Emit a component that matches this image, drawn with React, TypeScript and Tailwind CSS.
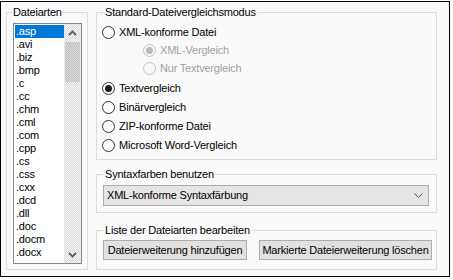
import React from 'react';

const extensions = [
  '.asp', '.avi', '.biz', '.bmp', '.c', '.cc', '.chm', '.cml', '.com', '.cpp',
  '.cs', '.css', '.cxx', '.dcd', '.dll', '.doc', '.docm', '.docx',
];

function Chevron({ up }: { up?: boolean }) {
  return (
    <svg width="9" height="6" viewBox="0 0 9 6">
      <polyline
        points={up ? '1,5 4.5,1.5 8,5' : '1,1 4.5,4.5 8,1'}
        fill="none"
        stroke="#606060"
        strokeWidth="1.8"
      />
    </svg>
  );
}

function Radio({
  label,
  checked,
  disabled,
  className = '',
}: {
  label: string;
  checked?: boolean;
  disabled?: boolean;
  className?: string;
}) {
  return (
    <div className={`flex items-center gap-[4px] ${className}`}>
      <span
        className={`w-[13px] h-[13px] rounded-full border flex items-center justify-center ${
          disabled ? 'border-[#c4c4c4] bg-[#f7f7f7]' : 'border-[#333333] bg-white'
        }`}
      >
        {checked && (
          <span
            className={`w-[7px] h-[7px] rounded-full ${disabled ? 'bg-[#bcbcbc]' : 'bg-[#1a1a1a]'}`}
          />
        )}
      </span>
      <span className={disabled ? 'text-[#a0a0a0]' : 'text-black'}>{label}</span>
    </div>
  );
}

function Group({
  title,
  className = '',
  legendClass = 'ml-[7px]',
  children,
}: {
  title: string;
  className?: string;
  legendClass?: string;
  children: React.ReactNode;
}) {
  return (
    <fieldset className={`border border-[#dcdcdc] ${className}`}>
      <legend className={`${legendClass} px-[1px] leading-[14px]`}>{title}</legend>
      {children}
    </fieldset>
  );
}

export default function App() {
  return (
    <div className="w-[453px] h-[280px] bg-white font-['Liberation_Sans',Arial,sans-serif] text-[11px] tracking-[-0.2px] text-black">
      <div className="mt-[1px] w-[450px] h-[276px] border border-black bg-[#fafafa] flex gap-[8px] pl-[5px] pt-[3px]">
        <Group title="Dateiarten" legendClass="ml-[5px]" className="w-[82px] h-[265px]">
          <div className="pl-[6px] pt-[4px]">
            <div className="w-[69px] h-[241px] border border-[#828790] bg-white flex">
              <div className="w-[50px] overflow-hidden pt-[1px] pl-[1px]">
                {extensions.map((ext, i) => (
                  <div
                    key={ext}
                    className={`h-[13px] leading-[13px] pl-[1px] ${
                      i === 0 ? 'bg-[#0078d7] text-white' : ''
                    }`}
                  >
                    {ext}
                  </div>
                ))}
              </div>
              <div className="w-[17px] flex flex-col bg-[repeating-conic-gradient(#dadada_0_25%,#f6f6f6_0_50%)] bg-[length:2px_2px]">
                <div className="h-[17px] flex items-center justify-center">
                  <Chevron up />
                </div>
                <div className="flex-1">
                  <div className="mt-[1px] mx-[1px] h-[40px] bg-[repeating-conic-gradient(#c4c4c4_0_25%,#d6d6d6_0_50%)] bg-[length:2px_2px]" />
                </div>
                <div className="h-[17px] flex items-center justify-center">
                  <Chevron />
                </div>
              </div>
            </div>
          </div>
        </Group>

        <div className="w-[341px] flex flex-col">
          <Group title="Standard-Dateivergleichsmodus" className="h-[155px]">
            <div className="pt-[4px] pl-[5px]">
              <Radio label="XML-konforme Datei" className="h-[18px]" />
              <Radio label="XML-Vergleich" checked disabled className="h-[18px] pl-[41px]" />
              <Radio label="Nur Textvergleich" disabled className="h-[18px] pl-[41px]" />
              <Radio label="Textvergleich" checked className="h-[19px] mt-[2px]" />
              <Radio label="Binärvergleich" className="h-[19px]" />
              <Radio label="ZIP-konforme Datei" className="h-[19px]" />
              <Radio label="Microsoft Word-Vergleich" className="h-[19px]" />
            </div>
          </Group>

          <Group title="Syntaxfarben benutzen" className="h-[46px] mt-[7px]">
            <div className="pt-[4px] pl-[6px]">
              <div className="w-[326px] h-[21px] border border-[#adadad] bg-[#e5e5e5] flex items-center justify-between pl-[3px] pr-[5px]">
                <span>XML-konforme Syntaxfärbung</span>
                <svg width="9" height="5" viewBox="0 0 9 5">
                  <polyline points="0.5,0.5 4.5,4.5 8.5,0.5" fill="none" stroke="#555555" strokeWidth="1" />
                </svg>
              </div>
            </div>
          </Group>

          <Group title="Liste der Dateiarten bearbeiten" className="h-[47px] mt-[10px]">
            <div className="pt-[3px] pl-[6px] flex gap-[12px]">
              <button className="w-[144px] h-[20px] border border-[#adadad] bg-[#e1e1e1] flex items-center justify-center whitespace-nowrap">
                Dateierweiterung hinzufügen
              </button>
              <button className="w-[173px] h-[20px] border border-[#adadad] bg-[#e1e1e1] flex items-center justify-center whitespace-nowrap">
                Markierte Dateierweiterung löschen
              </button>
            </div>
          </Group>
        </div>
      </div>
    </div>
  );
}
